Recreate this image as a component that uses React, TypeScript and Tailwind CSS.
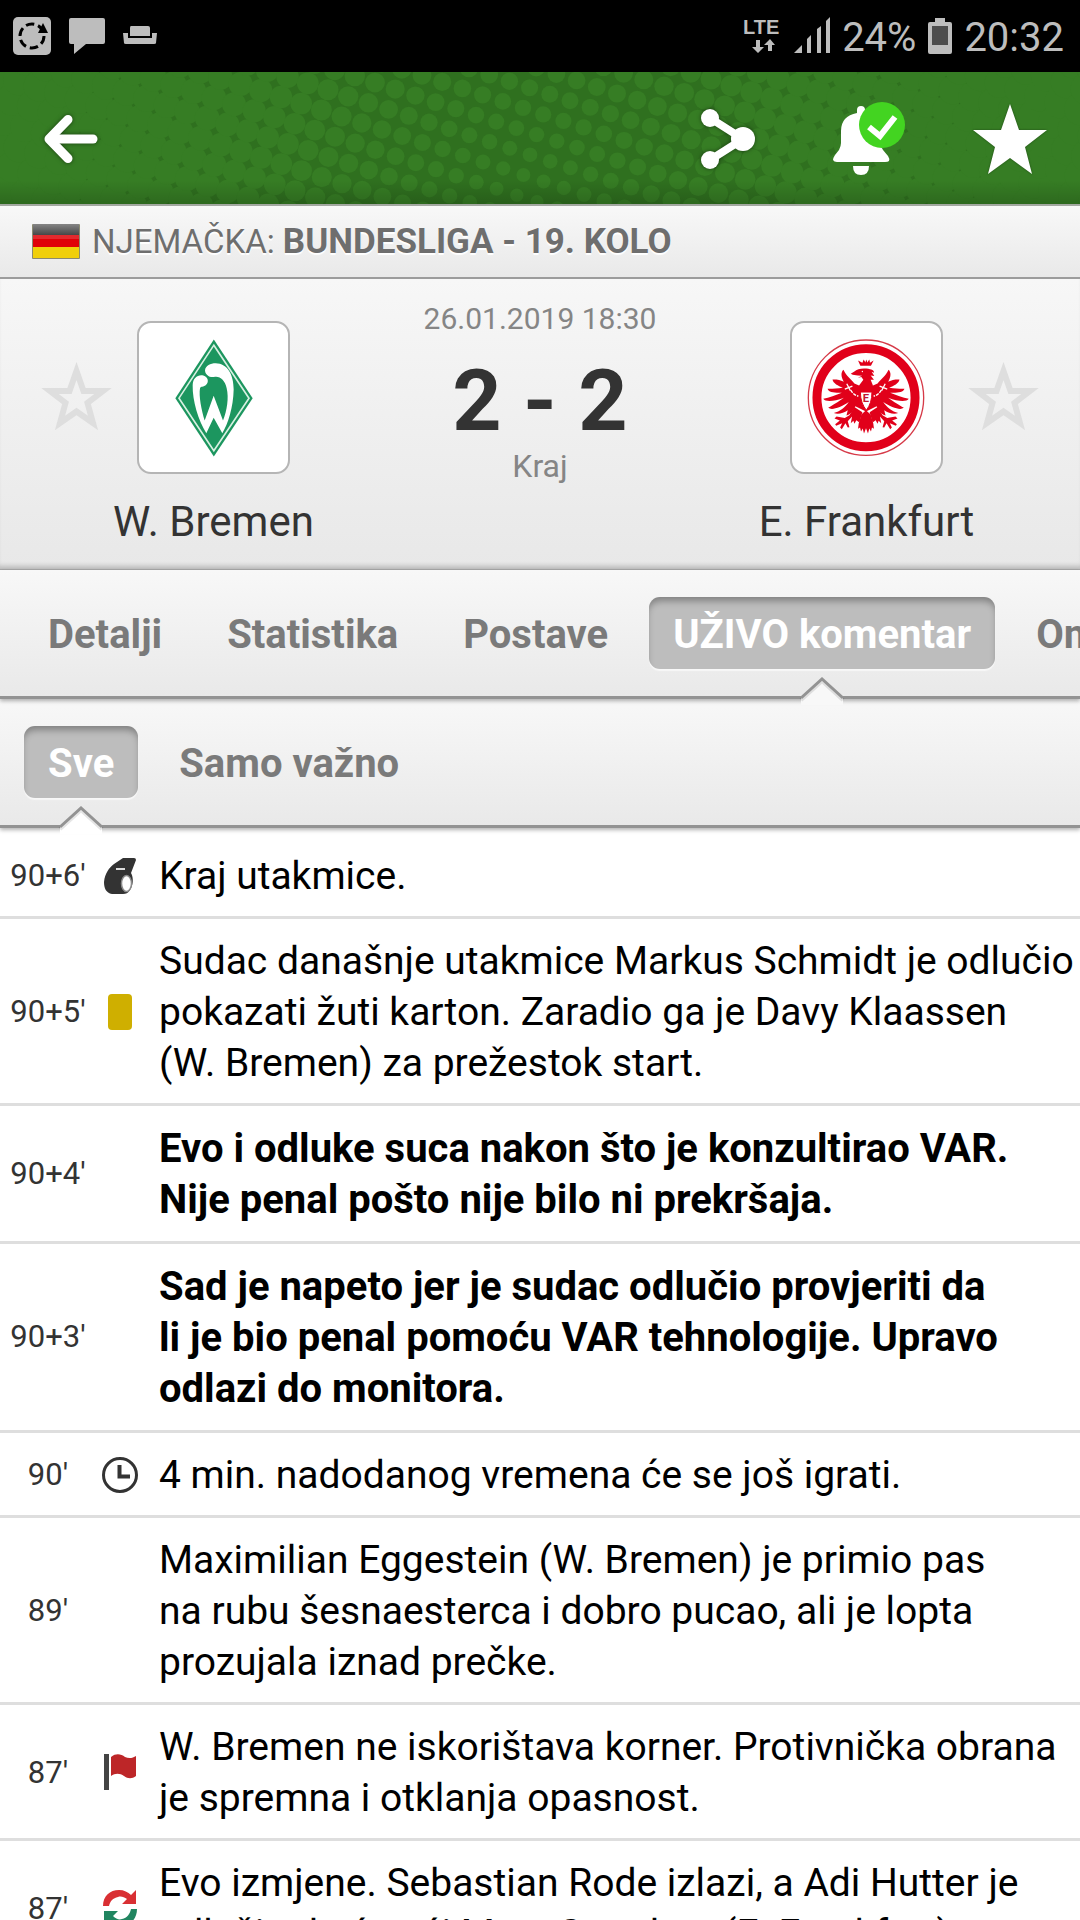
import React from 'react';
import clsx from 'clsx';

type EventIcon = 'whistle' | 'yellow' | 'clock' | 'corner' | 'sub';

type Comment = {
  time: string;
  icon?: EventIcon;
  important?: boolean;
  lines: string[];
};

const tabs = ['Detalji', 'Statistika', 'Postave', 'UŽIVO komentar', 'Omjeri'];
const filters = ['Sve', 'Samo važno'];

const comments: Comment[] = [
  { time: "90+6'", icon: 'whistle', lines: ['Kraj utakmice.'] },
  {
    time: "90+5'",
    icon: 'yellow',
    lines: [
      'Sudac današnje utakmice Markus Schmidt je odlučio',
      'pokazati žuti karton. Zaradio ga je Davy Klaassen',
      '(W. Bremen) za prežestok start.',
    ],
  },
  {
    time: "90+4'",
    important: true,
    lines: ['Evo i odluke suca nakon što je konzultirao VAR.', 'Nije penal pošto nije bilo ni prekršaja.'],
  },
  {
    time: "90+3'",
    important: true,
    lines: [
      'Sad je napeto jer je sudac odlučio provjeriti da',
      'li je bio penal pomoću VAR tehnologije. Upravo',
      'odlazi do monitora.',
    ],
  },
  { time: "90'", icon: 'clock', lines: ['4 min. nadodanog vremena će se još igrati.'] },
  {
    time: "89'",
    lines: [
      'Maximilian Eggestein (W. Bremen) je primio pas',
      'na rubu šesnaesterca i dobro pucao, ali je lopta',
      'prozujala iznad prečke.',
    ],
  },
  {
    time: "87'",
    icon: 'corner',
    lines: ['W. Bremen ne iskorištava korner. Protivnička obrana', 'je spremna i otklanja opasnost.'],
  },
  {
    time: "87'",
    icon: 'sub',
    lines: ['Evo izmjene. Sebastian Rode izlazi, a Adi Hutter je', 'odlučio da će ući Marc Stendera (E. Frankfurt).'],
  },
];

// Halftone dots of the header, smallest around the middle of the bottom edge
function buildDots() {
  const dots: { x: number; y: number; r: number }[] = [];
  for (let i = -32; i <= 36; i++) {
    for (let j = -18; j <= 20; j++) {
      const x = 483 + i * 20.2 + j * 6.6;
      const y = 90 + i * 6.5 - j * 20.2;
      if (x < -20 || x > 1100 || y < -20 || y > 152) continue;
      const r = 6.3 + Math.hypot(x - 525, y - 140) * 0.0182;
      dots.push({ x, y, r });
    }
  }
  return dots;
}

const dots = buildDots();

function StatusBar() {
  return (
    <div className="flex h-[72px] shrink-0 items-center justify-between bg-black pl-3 pr-4 text-[#bdbdbd]">
      <div className="flex items-center gap-[17px]">
        <svg className="h-10 w-10" viewBox="0 0 40 40" fill="currentColor">
          <rect x="1" y="1" width="38" height="38" rx="5" />
          <circle cx="20" cy="20" r="12" fill="none" stroke="#000" strokeWidth="3" strokeDasharray="8.5 4" />
          <path d="M26 17L31 7L36 17Z" fill="#000" />
        </svg>
        <svg className="h-10 w-9" viewBox="0 0 36 40" fill="currentColor">
          <path d="M2 2H34Q36 2 36 4V26Q36 28 34 28H17L5 38V28H2Q0 28 0 26V4Q0 2 2 2Z" />
        </svg>
        <svg className="h-10 w-9" viewBox="0 0 36 40" fill="currentColor">
          <path d="M9 10H26Q28 10 28 12V20H8V12Q8 10 9 10Z" />
          <path d="M1 17H6V22H30V17H35L34 27Q34 28 32 28H4Q2 28 2 27Z" />
        </svg>
      </div>
      <div className="flex items-center gap-3 text-[40px] leading-[48px]">
        <svg className="h-10 w-10" viewBox="0 0 40 40" fill="currentColor">
          <text x="1" y="18" fontSize="20" fontWeight="700" fontFamily="Liberation Sans, sans-serif">LTE</text>
          <path d="M14 24H18V31H22L16 37L10 31H14Z" />
          <path d="M26 35H30V29H33L28 23L22 29H26Z" />
        </svg>
        <svg className="h-10 w-9" viewBox="0 0 36 40" fill="currentColor">
          <path d="M0 37L8 29V37Z" />
          <path d="M13 23L17 19V37H13Z" />
          <path d="M23 13L27 10V37H23Z" />
          <path d="M32 5L36 1V37H32Z" />
        </svg>
        <span className="pt-1">24%</span>
        <svg className="h-10 w-6" viewBox="0 0 24 40" fill="currentColor">
          <path d="M7 2H17V6H22Q24 6 24 8V36Q24 38 22 38H2Q0 38 0 36V8Q0 6 2 6H7Z" />
          <rect x="4" y="10" width="16" height="19" fill="#4d4d4d" />
        </svg>
        <span className="pt-1">20:32</span>
      </div>
    </div>
  );
}

function Header() {
  return (
    <header className="relative h-[134px] shrink-0 border-b-2 border-[#a3a8a1] bg-[#2f701f]">
      <svg className="absolute inset-0 h-full w-full" viewBox="0 0 1080 132" preserveAspectRatio="xMidYMid slice">
        <defs>
          <linearGradient id="shade" x1="0" y1="0" x2="0" y2="1">
            <stop offset="0.82" stopColor="#000" stopOpacity="0" />
            <stop offset="1" stopColor="#000" stopOpacity="0.16" />
          </linearGradient>
        </defs>
        {dots.map((d, i) => (
          <circle key={i} cx={d.x} cy={d.y} r={d.r} fill="#367d24" />
        ))}
        <rect width="1080" height="132" fill="url(#shade)" />
      </svg>
      <div className="relative flex h-full items-center justify-between pl-11 pr-[33px] pt-0.5 text-white">
        <button aria-label="Natrag">
          <svg className="h-[50px] w-[54px] drop-shadow-[0_0_2px_rgba(0,0,0,0.5)]" viewBox="0 0 54 50" fill="none" stroke="currentColor" strokeLinecap="round" strokeLinejoin="round">
            <path d="M49 25H8" strokeWidth="9" />
            <path d="M24 5.500L5 25L24 44.500" strokeWidth="9" />
          </svg>
        </button>
        <div className="flex items-center gap-[68px]">
          <button aria-label="Podijeli">
            <svg className="h-[62px] w-16 drop-shadow-[0_0_2px_rgba(0,0,0,0.5)]" viewBox="0 0 64 62" fill="currentColor">
              <path d="M9 10L42 31L9 52" fill="none" stroke="currentColor" strokeWidth="8" strokeLinejoin="round" />
              <circle cx="9" cy="10" r="9" />
              <circle cx="9" cy="52" r="9" />
              <circle cx="42" cy="31" r="12" />
            </svg>
          </button>
          <button aria-label="Obavijesti">
            <svg className="h-[74px] w-[72px]" viewBox="0 0 72 74" fill="currentColor">
              <path d="M24 8Q24 4 28 4Q32 4 32 8V11Q47 14 47 29V40Q47 44 50 48L55 54Q57 57 56 59Q55 60 52 60H4Q1 60 0 58Q0 56 2 53L6 48Q8 44 8 41V29Q8 14 24 11Z" />
              <path d="M20 64H36Q36 73 28 73Q20 73 20 64Z" />
              <circle cx="49" cy="23" r="23" fill="#43d421" />
              <path d="M36 25L47 34L62 15" fill="none" stroke="currentColor" strokeWidth="6" />
            </svg>
          </button>
          <button aria-label="Favorit">
            <svg className="h-[70px] w-[74px] drop-shadow-[0_0_1px_rgba(0,0,0,0.4)]" viewBox="0 0 74 70" fill="currentColor">
              <path d="M37 0L46 26H74L52 43L59 70L37 54L15 70L22 43L0 26H28Z" />
            </svg>
          </button>
        </div>
      </div>
    </header>
  );
}

function League() {
  return (
    <div className="flex h-[73px] shrink-0 items-center border-b-2 border-[#9c9c9c] bg-gradient-to-b from-[#f8f8f8] to-[#e9e9e9] pl-8 text-[33px] leading-[44px] text-[#6e6e6e] [text-shadow:0_2px_1px_#fff]">
      <svg className="mr-3 h-9 w-12" viewBox="0 0 48 36">
        <defs>
          <linearGradient id="flagBlack" x1="0" y1="0" x2="0" y2="1">
            <stop offset="0" stopColor="#858585" />
            <stop offset="1" stopColor="#474747" />
          </linearGradient>
        </defs>
        <rect width="48" height="35" rx="1" fill="#8a8a70" />
        <rect x="1" width="46" height="11" fill="url(#flagBlack)" />
        <rect x="1" y="11" width="46" height="12" fill="#e00008" />
        <rect x="1" y="11" width="46" height="4" fill="#e32a2e" />
        <rect x="1" y="23" width="46" height="11" fill="#f0cf0a" />
      </svg>
      <p className="whitespace-pre">
        NJEMAČKA: <b className="text-[35px]">BUNDESLIGA - 19. KOLO</b>
      </p>
    </div>
  );
}

function StarOutline() {
  return (
    <button aria-label="Prati momčad" className="flex h-[153px] items-center">
      <svg className="h-[72px] w-[73px]" viewBox="0 0 73 72" fill="none" stroke="#dedede" strokeWidth="6">
        <path d="M36.500 9L43.500 29H63L47.500 41L53 61L36.500 49.500L20 61L25.500 41L10 29H29.500Z" />
      </svg>
    </button>
  );
}

function WerderCrest() {
  return (
    <svg className="h-[118px] w-[78px]" viewBox="134 56 234 353">
      <path d="M250.500 57L367 233L250.500 408L135 233Z" fill="#1c965f" />
      <path d="M250.500 74L356 233L250.500 391L146 233Z" fill="none" stroke="#d8f0e2" strokeWidth="5" />
      <path
        d="M228 338C204 300 186 240 187 195C187 172 203 161 219 165C234 169 237 186 226 194C219 199 211 197 209 203C205 225 213 268 223 300L250 226L278 300C290 270 296 232 289 203C284 180 270 167 254 169C238 173 224 162 224 149C226 135 240 128 256 128C292 129 310 162 310 207C309 260 293 310 276 338L250 292Z"
        fill="#fff"
      />
    </svg>
  );
}

function HalfEagle() {
  return (
    <g fill="#e1001a">
      {/* wing feathers */}
      <path d="M257 212L236 225L222 219C211 205 198 198 189 178C180 186 182 201 190 214C175 207 168 207 156 207C158 219 173 226 187 232C168 234 151 236 141 235C144 246 163 248 184 247C166 254 146 263 128 265C134 275 160 274 190 262C174 274 153 287 143 292C153 302 180 291 205 275C194 291 178 304 160 308C172 313 189 309 202 300L198 316C211 314 219 300 225 288L257 304Z" />
      {/* leg and talons */}
      <path d="M222 290L207 315L193 323L168 319L162 325L178 331L164 342L167 347L185 339L179 352L184 357L195 339L202 352L207 351L202 333L215 319L211 339L219 332L222 341L228 330L237 337L246 306Z" />
      <path d="M257 300L243 313L235 340L233 356L239 352L242 364L247 355L251 370L257 354Z" />
    </g>
  );
}

function EintrachtCrest() {
  return (
    <svg className="h-[118px] w-[118px]" viewBox="79 85 356 356">
      <circle cx="257" cy="262" r="174" fill="#fff" stroke="#d63a48" strokeWidth="4" />
      <circle cx="257" cy="262" r="148" fill="#fff" stroke="#e1001a" strokeWidth="27" />
      <HalfEagle />
      <g transform="translate(514 0) scale(-1 1)">
        <HalfEagle />
      </g>
      <g fill="#e1001a">
        <path d="M240 166L233 150L246 157L250 147L255 156L258 147L261 156L267 147L269 157L280 150L272 166Z" />
        <path d="M236 225L249 208L243 200L232 202L245 196L232 195L217 193L211 190L222 183C229 175 243 173 258 174C275 176 282 180 281 187L274 184L282 197L271 195L281 208L271 208L278 225Z" />
      </g>
      <circle cx="246" cy="183" r="2" fill="#fff" />
      <g stroke="#fff" strokeWidth="4" fill="none">
        <path d="M193 236L216 227M199 220L210 241" />
        <path d="M321 236L298 227M315 220L304 241" />
        <path d="M211 239C218 251 225 256 234 257" strokeDasharray="10 3" />
        <path d="M303 239C296 251 289 256 280 257" strokeDasharray="10 3" />
      </g>
      <path d="M240 245H275C275 268 269 286 258 300C247 286 240 268 240 245Z" fill="#fff" stroke="#e1001a" strokeWidth="3" />
      <text x="257" y="274" textAnchor="middle" fontSize="34" fontWeight="700" fontFamily="Roboto, sans-serif" fill="#c21530">E</text>
    </svg>
  );
}

function Team({ name, children }: { name: string; children: React.ReactNode }) {
  return (
    <div className="flex w-[153px] flex-col items-center">
      <div className="flex h-[153px] w-[153px] items-center justify-center rounded-[14px] border-2 border-[#b5b5b5] bg-white">
        {children}
      </div>
      <p className="mt-[22px] whitespace-nowrap text-[42px] leading-[52px] text-[#333]">{name}</p>
    </div>
  );
}

function Match() {
  return (
    <section className="flex h-[291px] shrink-0 justify-between border-b border-[#a8a8a8] bg-gradient-to-b from-[#f7f7f7] to-[#e8e8e8] px-10 shadow-[inset_0_-6px_5px_-3px_rgba(0,0,0,0.2)]">
      <div className="flex gap-6 pt-[42px]">
        <StarOutline />
        <Team name="W. Bremen">
          <WerderCrest />
        </Team>
      </div>
      <div className="flex flex-col items-center pt-5 text-[#858585]">
        <time className="text-[30px] leading-10">26.01.2019 18:30</time>
        <p className="mt-4 text-[86px] font-bold leading-[92px] text-[#333]">2 - 2</p>
        <p className="text-[32px] leading-[38px]">Kraj</p>
      </div>
      <div className="flex gap-6 pt-[42px]">
        <Team name="E. Frankfurt">
          <EintrachtCrest />
        </Team>
        <StarOutline />
      </div>
    </section>
  );
}

type TabBarProps = {
  items: string[];
  active: string;
  className: string;
  notchFill: string;
};

function TabBar({ items, active, className, notchFill }: TabBarProps) {
  return (
    <nav
      className={clsx(
        'relative flex h-[129px] shrink-0 items-start gap-[17px] border-b-[3px] border-[#939393] bg-gradient-to-b from-[#f8f8f8] to-[#e9e9e9] pl-6 pt-[27px] shadow-[0_2px_4px_rgba(0,0,0,0.3)]',
        className,
      )}
    >
      {items.map((item) => (
        <button
          key={item}
          className={clsx(
            'relative h-[72px] shrink-0 rounded-[11px] px-6 pt-1 text-[40px] font-bold leading-[52px]',
            item === active
              ? 'bg-[#bdbdbd] text-white shadow-[inset_0_6px_7px_-2px_rgba(0,0,0,0.32),0_2px_1px_#f8f8f8]'
              : 'text-[#7a7a7a]',
          )}
        >
          {item}
          {item === active && (
            <svg className="absolute left-1/2 top-20 h-7 w-12 -translate-x-1/2" viewBox="0 0 48 28">
              <path d="M3 20L24 1L45 20V28H3Z" fill={notchFill} />
              <path d="M3 23L24 4L45 23" fill="none" stroke="#000" strokeOpacity="0.1" strokeWidth="4" />
              <path d="M3 21L24 2L45 21" fill="none" stroke="#939393" strokeWidth="3" />
            </svg>
          )}
        </button>
      ))}
    </nav>
  );
}

function Icon({ name }: { name: EventIcon }) {
  switch (name) {
    case 'whistle':
      return (
        <svg className="h-9 w-8" viewBox="0 0 32 36">
          <path d="M19 0H30Q32 0 32 2L27 15C30 20 29 28 26 32C24 35 22 36 19 36H8C2 35 0 30 0 24C1 15 5 10 10 6Z" fill="#333" />
          <path d="M12 11H21" stroke="#ddd" strokeWidth="2" />
          <ellipse cx="22.500" cy="25.500" rx="5" ry="8" fill="#fff" stroke="#8a8a8a" strokeWidth="1.500" />
        </svg>
      );
    case 'yellow':
      return <span className="h-9 w-6 rounded bg-[#cfaf00]" />;
    case 'clock':
      return (
        <svg className="h-9 w-9" viewBox="0 0 36 36" fill="none" stroke="#333">
          <circle cx="18" cy="18" r="16.500" strokeWidth="3" />
          <path d="M17.500 8V19.500H28" strokeWidth="4" />
        </svg>
      );
    case 'corner':
      return (
        <svg className="h-9 w-9" viewBox="0 0 36 36">
          <path d="M4.500 0V36" stroke="#444" strokeWidth="5" />
          <path d="M9 3C14 -1 19 0 23 3C27 5 31 4 34 2V22C30 25 26 25 22 22C18 19 13 19 9 22Z" fill="#bd2628" />
        </svg>
      );
    case 'sub':
      return (
        <svg className="h-9 w-9" viewBox="0 0 36 36">
          <path d="M1 16C1 6 8 0 17 0C22 0 26 2 29 5L34 0V14H20L25 9C22 7 19 6 16 7C11 8 8 11 7 16Z" fill="#d92f33" />
          <path d="M35 19C35 29 28 36 19 36C14 36 10 34 7 31L2 36V21H16L11 26C14 29 17 30 20 29C25 28 28 24 29 19Z" fill="#218560" />
        </svg>
      );
  }
}

function CommentRow({ time, icon, important, lines }: Comment) {
  return (
    <li
      className={clsx(
        'flex shrink-0 items-center border-b-[3px] border-[#dedede] pt-[15px]',
        important ? 'pb-4' : 'pb-[14px]',
      )}
    >
      <span className="w-24 shrink-0 text-center text-[31px] leading-[51px] text-[#333]">{time}</span>
      <span className="flex w-12 shrink-0 justify-center">{icon && <Icon name={icon} />}</span>
      <p
        className={clsx(
          'whitespace-nowrap pl-[15px] pt-0.5 leading-[51px] text-black',
          important ? 'text-[40px] font-bold' : 'text-[39px]',
        )}
      >
        {lines.map((line) => (
          <span key={line} className="block">
            {line}
          </span>
        ))}
      </p>
    </li>
  );
}

export default function App() {
  return (
    <div className="flex h-screen flex-col overflow-hidden bg-white font-[Roboto,sans-serif]">
      <StatusBar />
      <Header />
      <League />
      <Match />
      <TabBar items={tabs} active="UŽIVO komentar" className="z-20" notchFill="#f8f8f8" />
      <TabBar items={filters} active="Sve" className="z-10" notchFill="#ffffff" />
      <ul className="flex min-h-0 flex-1 flex-col overflow-hidden pt-1.5">
        {comments.map((c, i) => (
          <CommentRow key={i} {...c} />
        ))}
      </ul>
    </div>
  );
}
